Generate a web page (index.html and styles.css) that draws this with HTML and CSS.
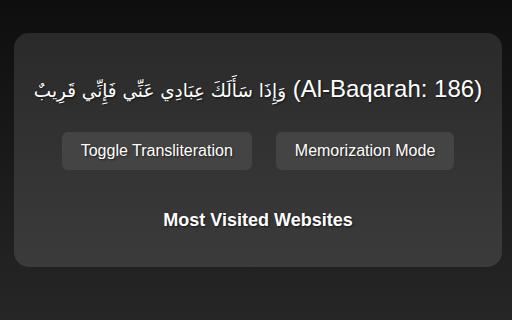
FILE: index.html
```html
<!DOCTYPE html>
<html lang="en">
<head>
<meta charset="utf-8">
<title>Quran Verse</title>
<link rel="stylesheet" href="styles.css">
</head>
<body>
<main class="card">
  <h1 class="verse"><span class="arabic" lang="ar">وَإِذَا سَأَلَكَ عِبَادِي عَنِّي فَإِنِّي قَرِيبٌ</span> (Al-Baqarah: 186)</h1>
  <div class="actions">
    <button class="btn">Toggle Transliteration</button>
    <button class="btn">Memorization Mode</button>
  </div>
  <h2 class="section-title">Most Visited Websites</h2>
</main>
</body>
</html>
```
FILE: styles.css
```css
html {
  height: 100%;
}
body {
  margin: 0;
  min-height: 100%;
  background: linear-gradient(to bottom, #0e0e0e, #262626);
  font-family: "Liberation Sans", Arial, "DejaVu Sans", sans-serif;
  color: #ffffff;
  padding: 33px 10px 0 14px;
  box-sizing: border-box;
}
.card {
  background: linear-gradient(to bottom, #2a2a2a, #3b3b3b);
  border-radius: 15px;
  padding: 41px 4px 36px;
  text-align: center;
  box-sizing: border-box;
  width: 488px;
  height: 234px;
}
.verse {
  margin: 0;
  font-size: 24px;
  font-weight: normal;
  line-height: 30px;
  height: 30px;
  white-space: nowrap;
  text-shadow: 1px 1px 2px rgba(0, 0, 0, 0.6);
}
.arabic {
  font-family: "DejaVu Sans", sans-serif;
  font-size: 18.4px;
}
.actions {
  display: flex;
  justify-content: center;
  gap: 24px;
  margin-top: 28px;
}
.btn {
  background: #444444;
  color: #ffffff;
  border: none;
  border-radius: 6px;
  padding: 0 19px;
  height: 38px;
  font-family: "Liberation Sans", Arial, sans-serif;
  font-size: 16px;
  text-shadow: 1px 1px 2px rgba(0, 0, 0, 0.6);
}
.section-title {
  margin: 40px 0 0;
  font-size: 18px;
  font-weight: bold;
  line-height: 21px;
  text-shadow: 1px 1px 2px rgba(0, 0, 0, 0.6);
}
```
